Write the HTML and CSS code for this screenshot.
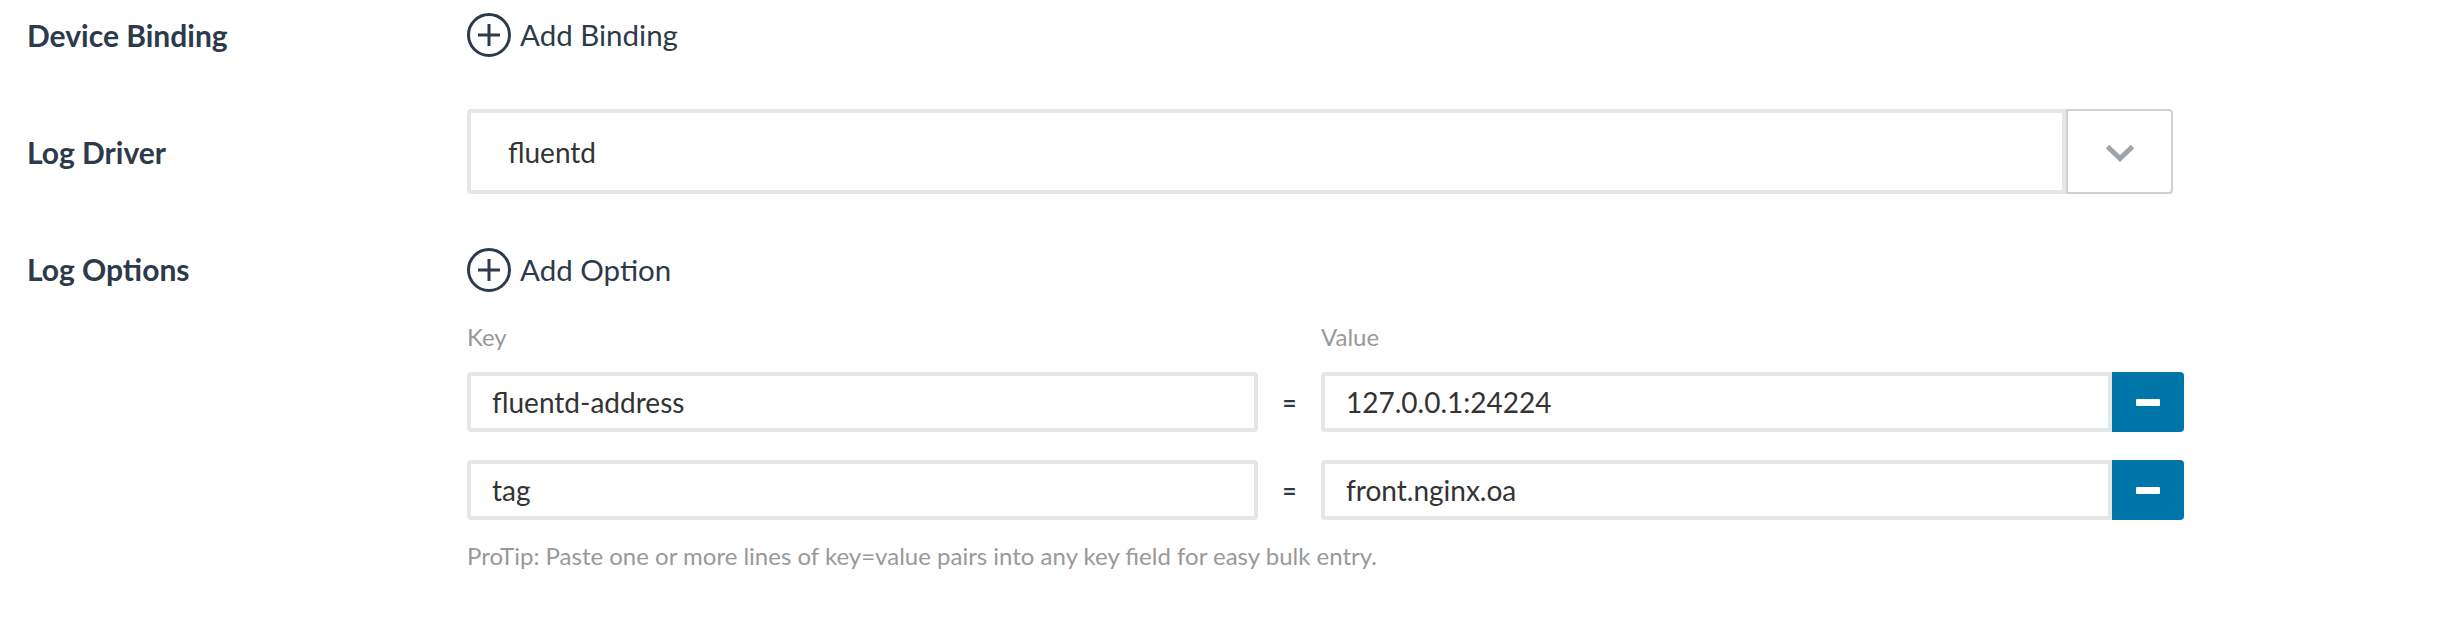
FILE: index.html
```html
<!DOCTYPE html>
<html>
<head>
<meta charset="utf-8">
<link rel="stylesheet" href="styles.css">
</head>
<body>
<div class="form">
  <div class="row row-binding">
    <div class="label">Device Binding</div>
    <div class="content">
      <a class="add-link" href="#">
        <svg viewBox="0 0 44 44" aria-hidden="true"><circle cx="22" cy="22" r="20.5" fill="none" stroke="currentColor" stroke-width="3"/><path d="M22 11V33M11 22H33" stroke="currentColor" stroke-width="3" fill="none"/></svg>
        <span>Add Binding</span>
      </a>
    </div>
  </div>

  <div class="row row-driver">
    <div class="label">Log Driver</div>
    <div class="content">
      <div class="select-group">
        <div class="select-box">fluentd</div>
        <div class="select-btn">
          <svg viewBox="0 0 30 18" aria-hidden="true"><polyline points="2.5,2.5 15,14.5 27.5,2.5" fill="none" stroke="currentColor" stroke-width="5"/></svg>
        </div>
      </div>
    </div>
  </div>

  <div class="row row-options">
    <div class="label">Log Options</div>
    <div class="content">
      <a class="add-link" href="#">
        <svg viewBox="0 0 44 44" aria-hidden="true"><circle cx="22" cy="22" r="20.5" fill="none" stroke="currentColor" stroke-width="3"/><path d="M22 11V33M11 22H33" stroke="currentColor" stroke-width="3" fill="none"/></svg>
        <span>Add Option</span>
      </a>
      <div class="kv">
        <div class="kv-head">
          <span class="col-key">Key</span>
          <span class="col-eq"></span>
          <span class="col-val">Value</span>
        </div>
        <div class="kv-row">
          <div class="col-key input">fluentd-address</div>
          <div class="col-eq eq">=</div>
          <div class="col-val input input-val">127.0.0.1:24224</div>
          <div class="remove"><span class="minus"></span></div>
        </div>
        <div class="kv-row">
          <div class="col-key input">tag</div>
          <div class="col-eq eq">=</div>
          <div class="col-val input input-val">front.nginx.oa</div>
          <div class="remove"><span class="minus"></span></div>
        </div>
        <p class="protip">ProTip: Paste one or more lines of key=value pairs into any key field for easy bulk entry.</p>
      </div>
    </div>
  </div>
</div>
</body>
</html>
```

FILE: styles.css
```css
* { box-sizing: border-box; }

body {
  margin: 0;
  background: #ffffff;
  font-family: Lato, "Noto Sans", sans-serif;
  color: #2c3a4b;
}

.form {
  padding-top: 12px;
}

.row {
  display: grid;
  grid-template-columns: 467px 1720px;
  align-items: center;
}

.label {
  padding-left: 27px;
  font-weight: 700;
  font-size: 30px;
  line-height: 36px;
  color: #2c3a4b;
}

.row-driver { margin-top: 52px; }

.row-options {
  margin-top: 53px;
  align-items: start;
}
.row-options .label { line-height: 45px; }

.add-link {
  display: flex;
  align-items: center;
  height: 45px;
  gap: 9px;
  font-size: 29.5px;
  color: #2c3a4b;
  text-decoration: none;
}
.add-link svg {
  width: 44px;
  height: 44px;
  display: block;
}

.select-group {
  display: flex;
  width: 1706px;
  height: 85px;
}
.select-box {
  flex: 1;
  border: 4px solid #e4e7e7;
  border-radius: 4px 0 0 4px;
  padding-left: 37px;
  display: flex;
  align-items: center;
  font-size: 28px;
  color: #333333;
}
.select-btn {
  width: 107px;
  border: 2px solid #cdd3d5;
  border-radius: 0 4px 4px 0;
  display: flex;
  align-items: center;
  justify-content: center;
  color: #9ca5aa;
}
.select-btn svg {
  width: 30px;
  height: 18px;
  display: block;
  margin-top: 3px;
}

.kv-head {
  display: flex;
  margin-top: 32px;
  font-size: 24px;
  line-height: 26px;
  color: #999999;
}

.col-key { width: 791px; }
.col-eq { width: 63px; }
.col-val { width: 791px; }

.kv-row {
  display: flex;
  height: 60px;
  margin-top: 22px;
}
.kv-row + .kv-row { margin-top: 28px; }

.input {
  border: 4px solid #e4e7e7;
  border-radius: 4px;
  padding-left: 21px;
  display: flex;
  align-items: center;
  font-size: 28px;
  color: #333333;
}
.input-val { border-radius: 4px 0 0 4px; }

.eq {
  display: flex;
  align-items: center;
  justify-content: center;
  font-size: 24px;
  font-weight: 700;
  color: #2c3a4b;
}

.remove {
  width: 72px;
  background: #0075a8;
  border-radius: 0 4px 4px 0;
  display: flex;
  align-items: center;
  justify-content: center;
}
.minus {
  width: 24px;
  height: 7px;
  background: #ffffff;
  border-radius: 1px;
}

.protip {
  margin: 23px 0 0 0;
  font-size: 24px;
  line-height: 26px;
  color: #999999;
}
```
